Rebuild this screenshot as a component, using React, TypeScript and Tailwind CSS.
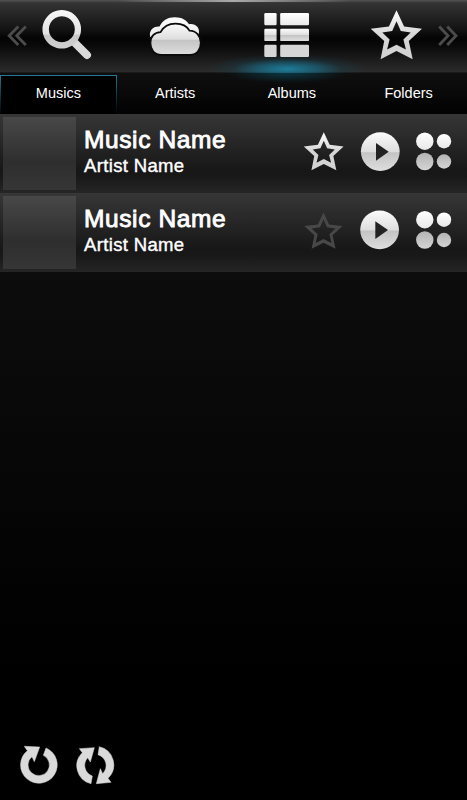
import React from "react";

const STAR =
  "M396.5 10.3L404.1 26.5L422 28.7L408.8 41L412.7 59.3L396.5 51L380.6 59.3L384.2 41L370.7 28.7L388.9 26.5ZM396.5 21.2L392.2 31L382.3 32.4L389.6 39.5L387.1 49.6L396.5 44.8L405.9 49.6L403.4 39.5L410.7 32.4L400.8 31Z";
const THIN_STAR =
  "M396.5 10.3L404 26.7L422 28.7L408.6 41L412.7 59.3L396.5 51.3L380.6 59.3L384.4 41L370.7 28.7L389 26.7ZM396.5 19.5L391.9 30.2L380.6 31.9L388.7 39.8L386 51.5L396.5 46.2L407.2 51.5L404.4 39.8L412.5 31.9L401.2 30.2Z";

function Gradients() {
  return (
    <svg width="0" height="0" className="absolute">
      <defs>
        <linearGradient id="icon" x1="0" y1="0" x2="0" y2="1">
          <stop offset="0" stopColor="#fbfbfb" />
          <stop offset=".5" stopColor="#dedede" />
          <stop offset=".53" stopColor="#c4c4c4" />
          <stop offset="1" stopColor="#dedede" />
        </linearGradient>
        <linearGradient id="lens" x1="0" y1="0" x2="0" y2="1">
          <stop offset="0" stopColor="#f8f8f8" />
          <stop offset=".62" stopColor="#e2e2e2" />
          <stop offset=".66" stopColor="#c8c8c8" />
          <stop offset="1" stopColor="#d0d0d0" />
        </linearGradient>
        <linearGradient id="smooth" x1="0" y1="0" x2="0" y2="1">
          <stop offset="0" stopColor="#fff" />
          <stop offset=".5" stopColor="#d6d6d6" />
          <stop offset="1" stopColor="#d2d2d2" />
        </linearGradient>
        <linearGradient id="dotTop" x1="0" y1="0" x2="0" y2="1">
          <stop offset="0" stopColor="#fff" />
          <stop offset="1" stopColor="#e8e8e8" />
        </linearGradient>
        <linearGradient id="dotBottom" x1="0" y1="0" x2="0" y2="1">
          <stop offset="0" stopColor="#b4b4b4" />
          <stop offset="1" stopColor="#d4d4d4" />
        </linearGradient>
      </defs>
    </svg>
  );
}

function Header() {
  return (
    <header className="relative flex h-[73px] shrink-0 bg-[linear-gradient(#555_0px,#484848_1px,#343434_3px,#262626_14px,#121212_30px,#040404_38px,#0a0a0a_46px,#1c1c1c_60px,#2b2b2b_72px,#080808_73px)]">
      <div className="absolute inset-x-0 top-0 h-0.5 bg-[linear-gradient(90deg,transparent_25%,#aaa_50%,transparent_75%)]" />
      <div className="absolute left-[207px] top-[54px] h-[30px] w-[160px] bg-[radial-gradient(closest-side,#1c88aae0,#16799990_38%,#10536a38_68%,transparent)] [clip-path:inset(0_0_11px_0)]" />
      <svg className="relative" width="34" height="73" viewBox="0 0 34 73" fill="none" stroke="#4c4c4c" strokeWidth="2.8">
        <path d="M18.3 26.5L9.2 35.8L18.3 45M25.8 26.5L16.7 35.8L25.8 45" />
      </svg>
      <svg className="relative" width="86" height="73" viewBox="34 0 86 73">
        <path d="M75.5 43.5L87 55" stroke="#dadada" strokeWidth="8" strokeLinecap="round" />
        <path fill="url(#lens)" fillRule="evenodd" d="M61.8 10A19.3 19.3 0 1 1 61.7 10ZM61.8 16.3A13 13 0 1 0 61.9 16.3Z" />
      </svg>
      <svg className="relative" width="112" height="73" viewBox="120 0 112 73">
        <path
          fill="url(#dotTop)"
          d="M150.3 37C148.5 31 153 26 159.5 26.5C163 20 167.5 17.2 174.8 17.2C182 17.2 186.5 20 189 24.2C195 23 200.5 27.5 198.7 34L196 36Z"
        />
        <path
          fill="url(#icon)"
          stroke="#0a0a0a"
          strokeWidth="1.8"
          d="M161.5 54.8C154.5 54.8 150.4 50 150.4 43C150.4 36.5 154.5 32.4 160.5 32.2C163.5 26.5 168 23.6 175.6 23.6C182.5 23.6 187 26.2 189.5 30.6C196 30.5 200.8 36 200.8 42.8C200.8 49.5 197 54.8 190 54.8Z"
        />
      </svg>
      <svg className="relative" width="110" height="73" viewBox="232 0 110 73">
        <g fill="url(#dotTop)">
          <rect x="264.3" y="13" width="12.3" height="12.3" rx="1.2" />
          <rect x="280.2" y="13" width="28.8" height="12.3" rx="1.2" />
        </g>
        <g fill="url(#icon)">
          <rect x="264.3" y="28.8" width="12.3" height="12.3" rx="1.2" />
          <rect x="280.2" y="28.8" width="28.8" height="12.3" rx="1.2" />
        </g>
        <g fill="#d6d6d6">
          <rect x="264.3" y="44.7" width="12.3" height="12.3" rx="1.2" />
          <rect x="280.2" y="44.7" width="28.8" height="12.3" rx="1.2" />
        </g>
      </svg>
      <svg className="relative" width="90" height="73" viewBox="342 0 90 73">
        <path fill="url(#smooth)" fillRule="evenodd" d={STAR} />
      </svg>
      <svg className="relative" width="35" height="73" viewBox="432 0 35 73" fill="none" stroke="#4c4c4c" strokeWidth="2.8">
        <path d="M439.2 26.5L448 35.8L439.2 45M447.2 26.5L456 35.8L447.2 45" />
      </svg>
    </header>
  );
}

function Tabs() {
  return (
    <nav className="relative grid h-[41px] shrink-0 grid-cols-4 bg-[linear-gradient(#0f0f0f,#020202)] text-[14.5px] leading-[41px] text-white">
      <div className="absolute left-[227px] top-0 h-[10px] w-[120px] bg-[radial-gradient(60px_10px_at_50%_0%,#0a4050cc,transparent)]" />
      <div className="relative text-center">
        <div className="absolute inset-x-0 bottom-0 top-0.5 bg-linear-to-b from-[#267b99] to-[#020608] p-px pb-0">
          <div className="h-full bg-black" />
        </div>
        <span className="relative">Musics</span>
      </div>
      <div className="text-center">Artists</div>
      <div className="relative text-center">Albums</div>
      <div className="text-center">Folders</div>
    </nav>
  );
}

function Row({ favorite }: { favorite: boolean }) {
  return (
    <div className="flex h-[79px] shrink-0 bg-[linear-gradient(#363636,#303030_12px,#171717_56px,#181818_62px,#232323_76px,#262626)] pl-[3px] pt-[3px]">
      <div className="h-[73px] w-[73px] bg-[linear-gradient(#484848,#2e2e2e_62%,#363636)]" />
      <div className="ml-2 flex flex-1 flex-col pt-[9px] text-white">
        <div className="text-[24.5px] leading-7 tracking-[0.6px] [-webkit-text-stroke:0.9px_white]">Music Name</div>
        <div className="text-[18.5px] leading-6 tracking-[0.35px] [-webkit-text-stroke:0.4px_white]">Artist Name</div>
      </div>
      <svg width="50" height="73" viewBox="299 117 50 73">
        {favorite ? (
          <path fill="url(#smooth)" fillRule="evenodd" transform="translate(16.1 124.3) scale(.776)" d={STAR} />
        ) : (
          <path fill="#484848" fillRule="evenodd" transform="translate(27.3 125.8) scale(.747 .74)" d={THIN_STAR} />
        )}
      </svg>
      <svg width="58" height="73" viewBox="349 117 58 73">
        <g transform={favorite ? "" : "translate(-.7 -.8)"}>
          <circle cx="380.3" cy="151.6" r="19.4" fill="url(#icon)" />
          <path d="M376 143L388.7 151.7L376 160.8Z" fill="#222" />
        </g>
      </svg>
      <svg width="60" height="73" viewBox="407 117 60 73">
        <g transform={favorite ? "" : "translate(0 -.5)"}>
          <circle cx="424.8" cy="141.2" r="8.7" fill="url(#dotTop)" />
          <circle cx="444" cy="141.2" r="7.2" fill="url(#dotTop)" />
          <circle cx="424.8" cy="161.5" r="8.7" fill="url(#dotBottom)" />
          <circle cx="444" cy="161.5" r="7.2" fill="url(#dotBottom)" />
        </g>
      </svg>
    </div>
  );
}

export default function App() {
  return (
    <div className="flex h-[800px] w-[467px] flex-col overflow-hidden bg-black font-['Liberation_Sans',sans-serif]">
      <Gradients />
      <Header />
      <Tabs />
      <Row favorite />
      <Row favorite={false} />
      <main className="flex flex-1 items-end bg-[linear-gradient(#0d0d0d,#000_75%)]">
        <svg width="140" height="70" viewBox="1 0 420 210" fill="#dadada" stroke="#dadada" strokeWidth="1.5">
          <path d="M139 54A55 55 0 1 1 83 62L74 49L120 51L104 95L97 80A32 32 0 1 0 131 76Z" />
          <path d="M274 161A55 55 0 0 1 248 68L239 56L284 53L272 96L264 83A34 34 0 0 0 278 138Z" />
          <path d="M299 50A56 56 0 0 1 325 145L334 157L290 161L302 116L309 131A34 34 0 0 0 295 74Z" />
        </svg>
      </main>
    </div>
  );
}
